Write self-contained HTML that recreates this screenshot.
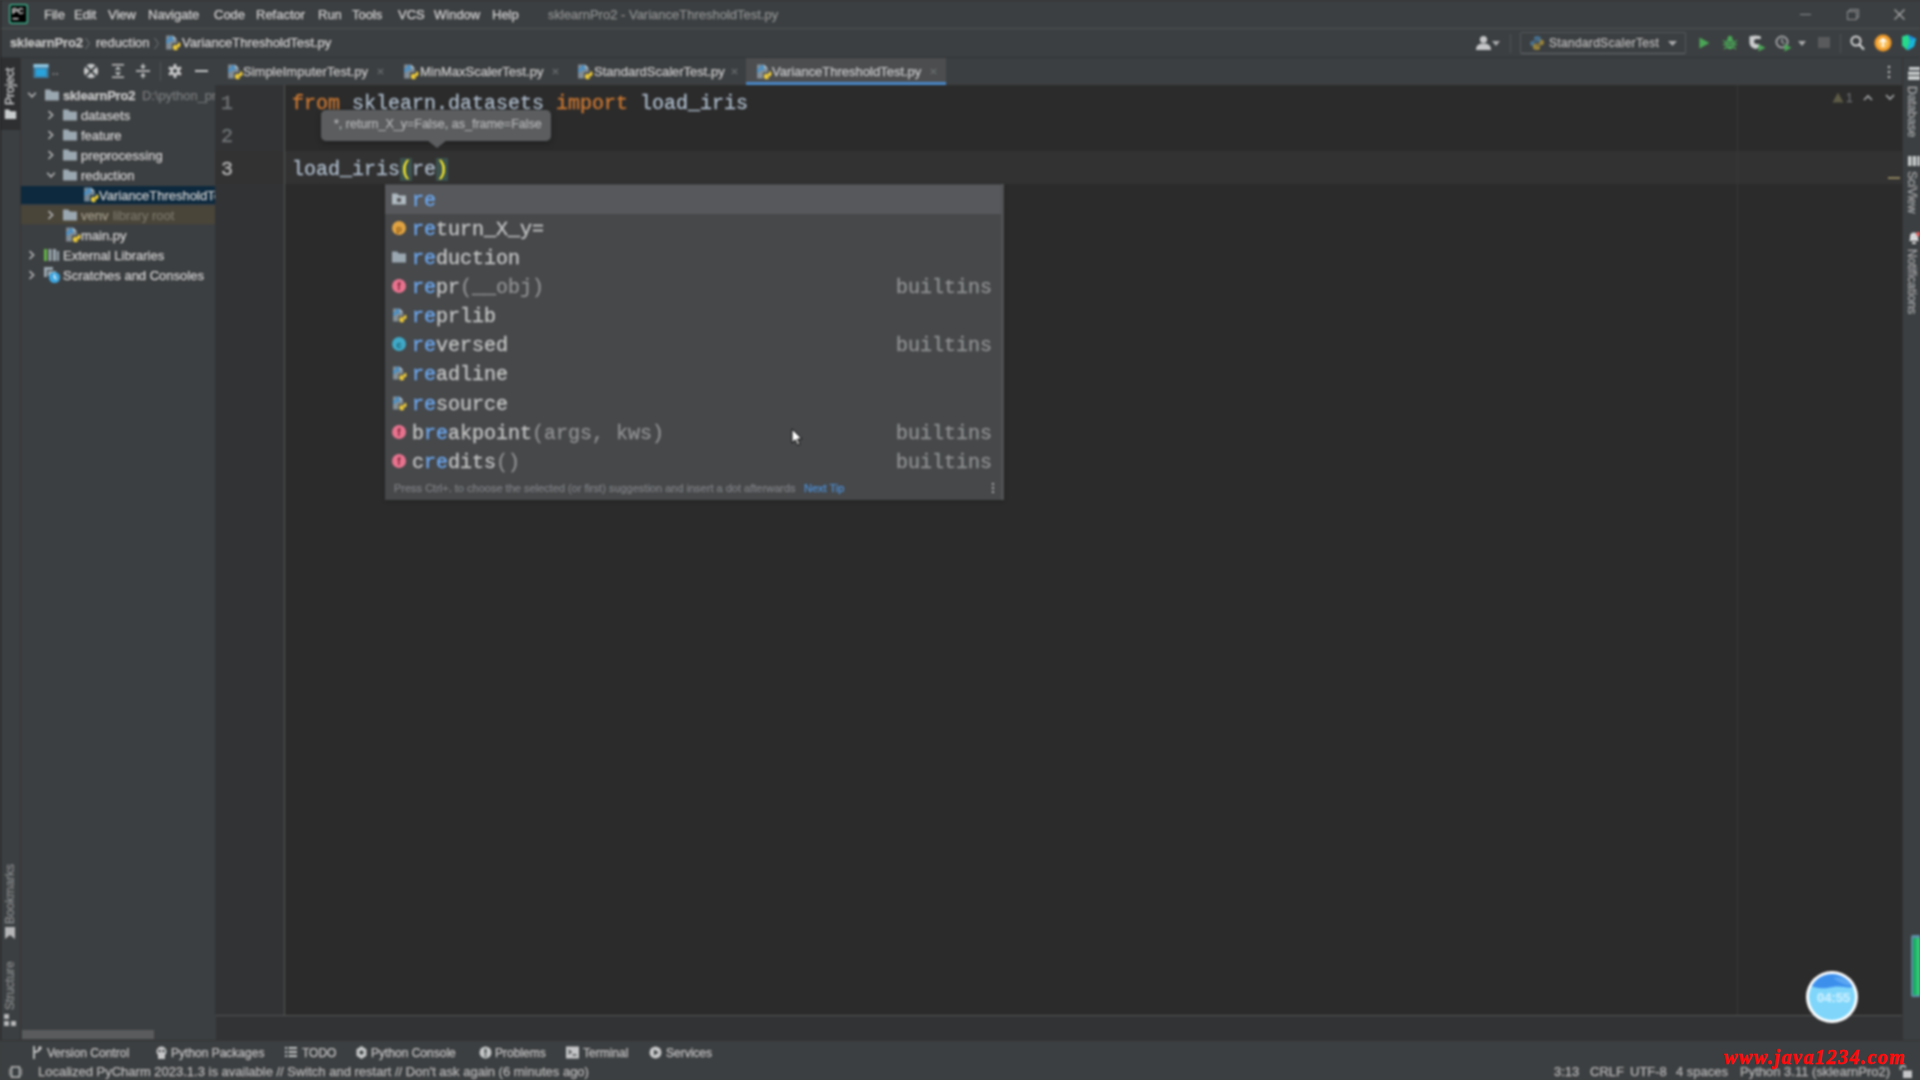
<!DOCTYPE html>
<html lang="en">
<head>
<meta charset="utf-8">
<title>sklearnPro2 - VarianceThresholdTest.py</title>
<style>
*{box-sizing:border-box;margin:0;padding:0}
html,body{width:1920px;height:1080px;overflow:hidden;background:#3c3f41}
body{position:relative;font-family:"Liberation Sans",sans-serif;font-size:13px;color:#d2d2d2}
#stage{position:absolute;left:0;top:0;width:1920px;height:1080px;overflow:hidden;background:#3c3f41;filter:blur(.9px)}
.abs{position:absolute}
.t{position:absolute;white-space:nowrap;line-height:1;-webkit-text-stroke:.25px}
.mono{font-family:"Liberation Mono",monospace;-webkit-text-stroke:.35px}
/* ---------- title bar ---------- */
#titlebar{left:0;top:0;width:1920px;height:29px;background:#3c3f41;border-top:1px solid #2f3133;border-bottom:1px solid #515354}
#titlebar .t{top:7px;font-size:13px;color:#d2d2d2}
/* ---------- nav bar ---------- */
#navbar{left:0;top:29px;width:1920px;height:29px;background:#3c3f41;border-bottom:1px solid #313335}
#navbar .t{top:7px;font-size:13px}
/* ---------- tool row / tabs ---------- */
#tabrow{left:0;top:58px;width:1920px;height:27px;background:#3c3f41}
.tab{position:absolute;top:0;height:27px}
.tab .t{top:7px;font-size:13px;color:#c8c8c8}
/* ---------- left strip ---------- */
#lstrip{left:0;top:58px;width:21px;height:982px;background:#3c3f41;border-right:1px solid #323232}
#rstrip{left:1902px;top:58px;width:18px;height:982px;background:#3c3f41;border-left:1px solid #323232}
.vtxt{position:absolute;white-space:nowrap;font-size:12px;line-height:1;color:#cccccc;-webkit-text-stroke:.25px;transform-origin:0 0}
/* ---------- project panel ---------- */
#project{left:21px;top:85px;width:194px;height:955px;background:#3c3f41;overflow:hidden}
.row{position:absolute;left:0;width:195px;height:20px}
.row .t{top:4px;font-size:13px;color:#d2d2d2}
/* ---------- editor ---------- */
#gutter{left:215px;top:85px;width:70px;height:930px;background:#313335;border-right:1px solid #555555}
#editor{left:285px;top:85px;width:1617px;height:930px;background:#2b2b2b;overflow:hidden}
.ln{position:absolute;left:6px;margin-top:2px;font-size:20px;line-height:33px;height:33px;color:#707375}
.code{position:absolute;left:7px;margin-top:2px;font-size:20px;line-height:33px;height:33px;color:#a9b7c6;white-space:pre}
.kw{color:#cc7832}
/* ---------- popup ---------- */
#popup{left:385px;top:184px;width:619px;height:316px;background:#46484a;border-right:3px solid #505254;box-shadow:0 1px 4px rgba(0,0,0,.25)}
.it{position:absolute;left:0;width:616px;height:29px}
.it .nm{position:absolute;left:27px;top:1px;font-size:20px;line-height:29px;color:#c0c0c0;white-space:pre}
.it .nm b{font-weight:normal;color:#6ba6ee}
.it .nm i{font-style:normal;color:#8d8f90}
.it .ty{position:absolute;right:9px;top:1px;font-size:20px;line-height:29px;color:#8d8f90}
.it svg{position:absolute;left:6px;top:6px}
/* ---------- bottom ---------- */
#edbottom{left:216px;top:1015px;width:1686px;height:25px;background:#313335;border-top:1px solid #555555}
#toolbar2{left:0;top:1040px;width:1920px;height:23px;background:#3c3f41;border-top:1px solid #323232}
#toolbar2 .t{top:6px;font-size:12px;color:#c2c2c2}
#status{left:0;top:1063px;width:1920px;height:17px;background:#3c3f41}
#status .t{top:2px;font-size:13px;color:#b8b8b8}
</style>
</head>
<body>
<div id="stage">

<!-- TITLE BAR -->
<div id="titlebar" class="abs">
  <svg class="abs" style="left:9px;top:3px" width="19" height="20" viewBox="0 0 19 20"><rect x="0.75" y="0.75" width="17.5" height="18.5" rx="2" fill="#000" stroke="#3fb48f" stroke-width="1.5"/><text x="3" y="9.5" font-family="Liberation Sans, sans-serif" font-size="8.5" font-weight="bold" fill="#fff">PC</text><rect x="3.5" y="14" width="6" height="1.3" fill="#fff"/></svg>
  <span class="t" style="left:44px">File</span>
  <span class="t" style="left:74px">Edit</span>
  <span class="t" style="left:108px">View</span>
  <span class="t" style="left:148px">Navigate</span>
  <span class="t" style="left:214px">Code</span>
  <span class="t" style="left:256px">Refactor</span>
  <span class="t" style="left:318px">Run</span>
  <span class="t" style="left:352px">Tools</span>
  <span class="t" style="left:398px">VCS</span>
  <span class="t" style="left:434px">Window</span>
  <span class="t" style="left:492px">Help</span>
  <span class="t" style="left:548px;color:#8f9192">sklearnPro2 - VarianceThresholdTest.py</span>
  <div class="abs" style="left:1800px;top:13px;width:11px;height:1px;background:#8c8e90"></div>
  <svg class="abs" style="left:1847px;top:8px" width="12" height="11" viewBox="0 0 12 11"><path d="M2.500 2.500V.500H11.500V8.500H9.500" fill="none" stroke="#8c8e90" stroke-width="1"/><rect x=".500" y="2.500" width="9" height="8" fill="none" stroke="#8c8e90" stroke-width="1"/></svg>
  <svg class="abs" style="left:1894px;top:8px" width="11" height="11" viewBox="0 0 11 11"><path d="M.500 .500l10 10M10.500 .500l-10 10" fill="none" stroke="#a9abad" stroke-width="1.200"/></svg>
</div>

<!-- NAV BAR -->
<div id="navbar" class="abs">
  <span class="t" style="left:10px;font-weight:bold;color:#c4c4c4;letter-spacing:-.15px">sklearnPro2</span>
  <svg class="abs" style="left:84px;top:8px" width="7" height="13" viewBox="0 0 7 13"><path d="M1.500 1L5.500 6.500 1.500 12" fill="none" stroke="#777a7c" stroke-width="1"/></svg>
  <span class="t" style="left:96px">reduction</span>
  <svg class="abs" style="left:153px;top:8px" width="7" height="13" viewBox="0 0 7 13"><path d="M1.500 1L5.500 6.500 1.500 12" fill="none" stroke="#777a7c" stroke-width="1"/></svg>
  <svg class="abs" style="left:164px;top:5px" width="17" height="17" viewBox="0 0 16 16"><path d="M2 1.5h6.5L12 5v4H7.5v5.5H2z" fill="#9aa7b0" opacity=".75"/><path d="M8.5 1.5V5H12z" fill="#c3ccd2" opacity=".9"/><path d="M3.2 3.2c0-1.1.9-1.6 2.4-1.6s2.3.5 2.3 1.6v2.2c0 .8-.6 1.3-1.4 1.3H4.6c-1 0-1.7.7-1.7 1.6v.9H2.3C1.300 9.2.8 8.300.8 6.900S1.300 4.600 2.300 4.600h3.300v-.5H3.200z" fill="#4a8fc4" transform="translate(1.2,0.600) scale(.95)"/><path d="M12.800 12.800c0 1.100-.9 1.600-2.400 1.600s-2.300-.5-2.300-1.600v-2.200c0-.8.600-1.300 1.400-1.300h1.900c1 0 1.700-.7 1.700-1.600v-.9h.6c1 0 1.500.9 1.500 2.300s-.5 2.300-1.500 2.300h-3.300v.5h2.400z" fill="#f4d03a" transform="translate(.6,1.200) scale(.98)"/></svg>
  <span class="t" style="left:182px">VarianceThresholdTest.py</span>
  <!-- right toolbar -->
  <svg class="abs" style="left:1476px;top:6px" width="15" height="16" viewBox="0 0 15 16"><circle cx="7.500" cy="4.500" r="3.600" fill="#c4c6c7"/><path d="M0 15c0-5 3-6.500 7.500-6.500S15 10 15 15z" fill="#c4c6c7"/></svg>
  <svg class="abs" style="left:1492px;top:12px" width="8" height="5" viewBox="0 0 8 5"><path d="M0 0h8L4 5z" fill="#a9abad"/></svg>
  <div class="abs" style="left:1510px;top:5px;width:1px;height:19px;background:#505355"></div>
  <div class="abs" style="left:1520px;top:3px;width:166px;height:22px;border:1px solid #56595b;border-bottom-color:#6a6d6f;border-radius:2px;background:#3c3f41"></div>
  <svg class="abs" style="left:1529px;top:6px;opacity:.65" width="16" height="16" viewBox="0 0 16 16"><path d="M8 1c-3 0-3 1.300-3 2.200V5h3.200v.8H3.300C2 5.800 1 6.800 1 8.500s1 2.700 2.300 2.700H5V9.300c0-1.200 1-2 2.200-2h3c1 0 1.800-.8 1.800-1.800V3.200C12 1.800 10.500 1 8 1z" fill="#4a86b5"/><path d="M8 15c3 0 3-1.300 3-2.200V11H7.800v-.8h4.900c1.300 0 2.300-1 2.300-2.700s-1-2.700-2.300-2.700H11v1.900c0 1.200-1 2-2.200 2h-3c-1 0-1.800.8-1.800 1.800v2.300C4 14.200 5.500 15 8 15z" fill="#c9a73a"/></svg>
  <span class="t" style="left:1549px;top:8px;font-size:12px;color:#bbbbbb;letter-spacing:.3px">StandardScalerTest</span>
  <svg class="abs" style="left:1668px;top:12px" width="9" height="5" viewBox="0 0 9 5"><path d="M0 0h9L4.500 5z" fill="#a9abad"/></svg>
  <svg class="abs" style="left:1699px;top:8px" width="11" height="12" viewBox="0 0 11 12"><path d="M.500 .500L10.500 6 .500 11.500z" fill="#4aa556"/></svg>
  <svg class="abs" style="left:1723px;top:6px" width="14" height="15" viewBox="0 0 14 15"><ellipse cx="7" cy="9" rx="4.300" ry="5.200" fill="#4aa556"/><circle cx="7" cy="3.300" r="2.500" fill="#4aa556"/><path d="M0 5.500l3.300 2M14 5.500l-3.300 2M0 9.500h3M14 9.500h-3M1 14l2.800-2.300M13 14l-2.800-2.300" stroke="#4aa556" stroke-width="1.300"/><path d="M4 7.500h6M4 10.500h6" stroke="#3c3f41" stroke-width="1"/></svg>
  <svg class="abs" style="left:1749px;top:6px" width="17" height="17" viewBox="0 0 17 17"><path d="M6.500 .500C3 .500.500 1.500.500 1.500v6c0 3.500 2.500 5.500 6 6.500 1.500-.4 2.800-1 3.800-2V9H7.500C6 9 5 8 5 6.500S6 4 7.500 4h4.300V1.500S9.500.500 6.500 .500z" fill="#c9cbcc"/><path d="M9.500 9L16.500 12.800 9.500 16.500z" fill="#4aa556"/></svg>
  <svg class="abs" style="left:1775px;top:6px" width="17" height="17" viewBox="0 0 17 17"><circle cx="7" cy="7" r="5.600" fill="none" stroke="#a2a4a6" stroke-width="1.800"/><path d="M7 3.200v4l2.300 1.600" fill="none" stroke="#a2a4a6" stroke-width="1.400"/><path d="M9.500 9L16.500 12.800 9.500 16.500z" fill="#4aa556"/></svg>
  <svg class="abs" style="left:1798px;top:12px" width="8" height="5" viewBox="0 0 8 5"><path d="M0 0h8L4 5z" fill="#a9abad"/></svg>
  <div class="abs" style="left:1818px;top:8px;width:12px;height:11px;background:#585a5c"></div>
  <div class="abs" style="left:1840px;top:5px;width:1px;height:19px;background:#505355"></div>
  <svg class="abs" style="left:1850px;top:6px" width="15" height="16" viewBox="0 0 15 16"><circle cx="6" cy="6" r="4.600" fill="none" stroke="#d0d2d3" stroke-width="2"/><path d="M9.300 9.500l4.700 5" stroke="#d0d2d3" stroke-width="2.200"/></svg>
  <svg class="abs" style="left:1874px;top:5px" width="18" height="18" viewBox="0 0 18 18"><circle cx="9" cy="9" r="8.500" fill="#ee9a2a"/><circle cx="9" cy="9" r="5.500" fill="#f9c05c"/><path d="M9 5v8M6 8l3-3 3 3" fill="none" stroke="#fff" stroke-width="1.700"/></svg>
  <svg class="abs" style="left:1901px;top:5px" width="17" height="17" viewBox="0 0 17 17"><path d="M1 2.500l6-1.800 8 3.800-2 8-6 3.800-6-5z" fill="#1f8fe0"/><path d="M1 2.500l6-1.800 2 6-3 9.600-5-5z" fill="#27d98a"/><path d="M7 16.300l2-9.600 6-2.200-2 8z" fill="#19b8d6"/></svg>
</div>

<!-- TAB ROW -->
<div id="tabrow" class="abs">
  <!-- project tool header icons -->
  <svg class="abs" style="left:33px;top:5px" width="16" height="16" viewBox="0 0 16 16"><rect x="0.500" y="1" width="15" height="14" fill="#3a7ea6"/><rect x="0.500" y="1" width="15" height="3.500" fill="#8ec3de"/><rect x="3" y="6" width="10" height="7" fill="#29a3dc"/></svg>
  <svg class="abs" style="left:52px;top:14px" width="9" height="4" viewBox="0 0 9 4"><circle cx="1.500" cy="2" r="1" fill="#8a8d8f"/><circle cx="5" cy="2" r="1" fill="#8a8d8f"/></svg>
  <svg class="abs" style="left:83px;top:5px" width="16" height="16" viewBox="0 0 16 16"><circle cx="8" cy="8" r="7.200" fill="#c4c6c7"/><path d="M3 3l10 10M13 3L3 13" stroke="#3c3f41" stroke-width="1.800"/><circle cx="8" cy="8" r="1.600" fill="#3c3f41"/></svg>
  <svg class="abs" style="left:110px;top:5px" width="16" height="16" viewBox="0 0 16 16"><path d="M2 1.800h12M2 14.200h12" stroke="#c4c6c7" stroke-width="1.600"/><path d="M8 3.500l3.200 3.300H4.800zM8 12.500l3.200-3.300H4.800z" fill="#c4c6c7"/></svg>
  <svg class="abs" style="left:135px;top:5px" width="16" height="16" viewBox="0 0 16 16"><path d="M1 8h14" stroke="#c4c6c7" stroke-width="1.600"/><path d="M8 6.200l3-3.400H5zM8 9.800l3 3.400H5z" fill="#c4c6c7"/><path d="M8 .8v2M8 13.200v2" stroke="#c4c6c7" stroke-width="1.600"/></svg>
  <div class="abs" style="left:160px;top:4px;width:1px;height:19px;background:#55585a"></div>
  <svg class="abs" style="left:168px;top:6px" width="14" height="14" viewBox="0 0 16 16"><rect x="6.400" y="0" width="3.200" height="16" transform="rotate(0 8 8)" fill="#c4c6c7"/><rect x="6.400" y="0" width="3.200" height="16" transform="rotate(60 8 8)" fill="#c4c6c7"/><rect x="6.400" y="0" width="3.200" height="16" transform="rotate(120 8 8)" fill="#c4c6c7"/><circle cx="8" cy="8" r="5.400" fill="#c4c6c7"/><circle cx="8" cy="8" r="2.300" fill="#3c3f41"/></svg>
  <div class="abs" style="left:195px;top:12px;width:13px;height:2px;background:#c4c6c7"></div>

  <!-- editor tabs -->
  <div class="tab" style="left:218px;width:175px">
    <svg class="abs" style="left:8px;top:5px" width="17" height="17" viewBox="0 0 16 16"><path d="M2 1.5h6.5L12 5v4H7.5v5.5H2z" fill="#9aa7b0" opacity=".75"/><path d="M8.5 1.5V5H12z" fill="#c3ccd2" opacity=".9"/><path d="M3.2 3.2c0-1.1.9-1.6 2.4-1.6s2.3.5 2.3 1.6v2.2c0 .8-.6 1.3-1.4 1.3H4.6c-1 0-1.7.7-1.7 1.6v.9H2.3C1.300 9.2.8 8.300.8 6.900S1.300 4.600 2.300 4.600h3.300v-.5H3.200z" fill="#4a8fc4" transform="translate(1.2,0.600) scale(.95)"/><path d="M12.800 12.800c0 1.100-.9 1.600-2.400 1.600s-2.300-.5-2.300-1.600v-2.200c0-.8.600-1.300 1.400-1.300h1.900c1 0 1.700-.7 1.700-1.600v-.9h.6c1 0 1.500.9 1.500 2.300s-.5 2.300-1.500 2.300h-3.300v.5h2.400z" fill="#f4d03a" transform="translate(.6,1.200) scale(.98)"/></svg>
    <span class="t" style="left:25px">SimpleImputerTest.py</span>
    <svg class="abs" style="left:158px;top:9px" width="9" height="9" viewBox="0 0 10 10"><path d="M2 2l6 6M8 2l-6 6" fill="none" stroke="#6e7173" stroke-width="1.200"/></svg>
  </div>
  <div class="tab" style="left:394px;width:174px">
    <svg class="abs" style="left:8px;top:5px" width="17" height="17" viewBox="0 0 16 16"><path d="M2 1.5h6.5L12 5v4H7.5v5.5H2z" fill="#9aa7b0" opacity=".75"/><path d="M8.5 1.5V5H12z" fill="#c3ccd2" opacity=".9"/><path d="M3.2 3.2c0-1.1.9-1.6 2.4-1.6s2.3.5 2.3 1.6v2.2c0 .8-.6 1.3-1.4 1.3H4.6c-1 0-1.7.7-1.7 1.6v.9H2.3C1.300 9.2.8 8.300.8 6.900S1.300 4.600 2.300 4.600h3.300v-.5H3.200z" fill="#4a8fc4" transform="translate(1.2,0.600) scale(.95)"/><path d="M12.800 12.800c0 1.100-.9 1.600-2.400 1.600s-2.300-.5-2.300-1.600v-2.200c0-.8.600-1.300 1.400-1.300h1.900c1 0 1.700-.7 1.700-1.600v-.9h.6c1 0 1.500.9 1.500 2.300s-.5 2.300-1.500 2.300h-3.300v.5h2.400z" fill="#f4d03a" transform="translate(.6,1.200) scale(.98)"/></svg>
    <span class="t" style="left:26px">MinMaxScalerTest.py</span>
    <svg class="abs" style="left:157px;top:9px" width="9" height="9" viewBox="0 0 10 10"><path d="M2 2l6 6M8 2l-6 6" fill="none" stroke="#6e7173" stroke-width="1.200"/></svg>
  </div>
  <div class="tab" style="left:568px;width:178px">
    <svg class="abs" style="left:8px;top:5px" width="17" height="17" viewBox="0 0 16 16"><path d="M2 1.5h6.5L12 5v4H7.5v5.5H2z" fill="#9aa7b0" opacity=".75"/><path d="M8.5 1.5V5H12z" fill="#c3ccd2" opacity=".9"/><path d="M3.2 3.2c0-1.1.9-1.6 2.4-1.6s2.3.5 2.3 1.6v2.2c0 .8-.6 1.3-1.4 1.3H4.6c-1 0-1.7.7-1.7 1.6v.9H2.3C1.300 9.2.8 8.300.8 6.900S1.300 4.600 2.300 4.600h3.300v-.5H3.200z" fill="#4a8fc4" transform="translate(1.2,0.600) scale(.95)"/><path d="M12.800 12.800c0 1.100-.9 1.600-2.400 1.600s-2.300-.5-2.300-1.600v-2.200c0-.8.600-1.300 1.400-1.300h1.900c1 0 1.700-.7 1.700-1.600v-.9h.6c1 0 1.500.9 1.500 2.300s-.5 2.300-1.500 2.300h-3.300v.5h2.400z" fill="#f4d03a" transform="translate(.6,1.200) scale(.98)"/></svg>
    <span class="t" style="left:26px">StandardScalerTest.py</span>
    <svg class="abs" style="left:162px;top:9px" width="9" height="9" viewBox="0 0 10 10"><path d="M2 2l6 6M8 2l-6 6" fill="none" stroke="#6e7173" stroke-width="1.200"/></svg>
  </div>
  <div class="tab" style="left:746px;width:200px;background:#4b4d4f;border-bottom:3px solid #4a88c7">
    <svg class="abs" style="left:9px;top:5px" width="17" height="17" viewBox="0 0 16 16"><path d="M2 1.5h6.5L12 5v4H7.5v5.5H2z" fill="#9aa7b0" opacity=".75"/><path d="M8.5 1.5V5H12z" fill="#c3ccd2" opacity=".9"/><path d="M3.2 3.2c0-1.1.9-1.6 2.4-1.6s2.3.5 2.3 1.6v2.2c0 .8-.6 1.3-1.4 1.3H4.6c-1 0-1.7.7-1.7 1.6v.9H2.3C1.300 9.2.8 8.300.8 6.900S1.300 4.600 2.300 4.600h3.300v-.5H3.200z" fill="#4a8fc4" transform="translate(1.2,0.600) scale(.95)"/><path d="M12.800 12.800c0 1.100-.9 1.600-2.400 1.600s-2.300-.5-2.300-1.600v-2.200c0-.8.600-1.300 1.400-1.300h1.900c1 0 1.700-.7 1.700-1.600v-.9h.6c1 0 1.500.9 1.500 2.300s-.5 2.300-1.500 2.300h-3.300v.5h2.400z" fill="#f4d03a" transform="translate(.6,1.200) scale(.98)"/></svg>
    <span class="t" style="left:26px">VarianceThresholdTest.py</span>
    <svg class="abs" style="left:183px;top:9px" width="9" height="9" viewBox="0 0 10 10"><path d="M2 2l6 6M8 2l-6 6" fill="none" stroke="#6e7173" stroke-width="1.200"/></svg>
  </div>
  <svg class="abs" style="left:1887px;top:7px" width="4" height="14" viewBox="0 0 4 14"><circle cx="2" cy="2" r="1.200" fill="#c4c6c7"/><circle cx="2" cy="7" r="1.200" fill="#c4c6c7"/><circle cx="2" cy="12" r="1.200" fill="#c4c6c7"/></svg>
</div>

<!-- LEFT STRIP -->
<div id="lstrip" class="abs">
  <div class="abs" style="left:0;top:0;width:20px;height:72px;background:#2d2f31"></div>
  <span class="vtxt" style="left:4px;top:47px;transform:rotate(-90deg);font-size:12px;color:#d0d0d0">Project</span>
  <svg class="abs" style="left:4px;top:50px" width="13" height="12" viewBox="0 0 16 14"><path d="M1 1.500h5.200l1.600 2H15v9.500H1z" fill="#c9cccd"/></svg>
  <span class="vtxt" style="left:4px;top:866px;transform:rotate(-90deg);font-size:12px;color:#8a8c8e">Bookmarks</span>
  <svg class="abs" style="left:5px;top:869px" width="10" height="12" viewBox="0 0 10 12"><path d="M0 0h10v12L5 8 0 12z" fill="#b4b6b8"/></svg>
  <span class="vtxt" style="left:4px;top:952px;transform:rotate(-90deg);font-size:12px;color:#8a8c8e">Structure</span>
  <svg class="abs" style="left:4px;top:956px" width="12" height="12" viewBox="0 0 12 12"><rect x="0" y="0" width="5" height="5" fill="#b4b6b8"/><rect x="0" y="7" width="5" height="5" fill="#b4b6b8"/><rect x="7" y="7" width="5" height="5" fill="#b4b6b8"/></svg>
</div>
<div class="abs" style="left:0;top:0;width:1px;height:1080px;background:#1e1f20"></div>

<!-- PROJECT -->
<div id="project" class="abs">
  <div class="row" style="top:0px;"><svg class="abs" style="left:6px;top:5px" width="10" height="10" viewBox="0 0 10 10"><path d="M1.200 2.800L5 6.800 8.800 2.800" fill="none" stroke="#b0b2b4" stroke-width="1.600"/></svg><svg class="abs" style="left:23px;top:2px" width="16" height="16" viewBox="0 0 16 16"><path d="M1 2.500h5.200l1.600 2H15v9H1z" fill="#9aa7b0"/></svg><span class="t" style="left:42px;font-weight:bold;color:#c8c8c8;letter-spacing:-.2px">sklearnPro2</span><span class="t" style="left:121px;color:#787a7c">D:\python_pro</span></div>
  <div class="row" style="top:20px;"><svg class="abs" style="left:25px;top:5px" width="10" height="10" viewBox="0 0 10 10"><path d="M2.500 1.200L6.600 5 2.500 8.800" fill="none" stroke="#b0b2b4" stroke-width="1.600"/></svg><svg class="abs" style="left:41px;top:2px" width="16" height="16" viewBox="0 0 16 16"><path d="M1 2.500h5.200l1.600 2H15v9H1z" fill="#9aa7b0"/></svg><span class="t" style="left:60px">datasets</span></div>
  <div class="row" style="top:40px;"><svg class="abs" style="left:25px;top:5px" width="10" height="10" viewBox="0 0 10 10"><path d="M2.500 1.200L6.600 5 2.500 8.800" fill="none" stroke="#b0b2b4" stroke-width="1.600"/></svg><svg class="abs" style="left:41px;top:2px" width="16" height="16" viewBox="0 0 16 16"><path d="M1 2.500h5.200l1.600 2H15v9H1z" fill="#9aa7b0"/></svg><span class="t" style="left:60px">feature</span></div>
  <div class="row" style="top:60px;"><svg class="abs" style="left:25px;top:5px" width="10" height="10" viewBox="0 0 10 10"><path d="M2.500 1.200L6.600 5 2.500 8.800" fill="none" stroke="#b0b2b4" stroke-width="1.600"/></svg><svg class="abs" style="left:41px;top:2px" width="16" height="16" viewBox="0 0 16 16"><path d="M1 2.500h5.200l1.600 2H15v9H1z" fill="#9aa7b0"/></svg><span class="t" style="left:60px">preprocessing</span></div>
  <div class="row" style="top:80px;"><svg class="abs" style="left:25px;top:5px" width="10" height="10" viewBox="0 0 10 10"><path d="M1.200 2.800L5 6.800 8.800 2.800" fill="none" stroke="#b0b2b4" stroke-width="1.600"/></svg><svg class="abs" style="left:41px;top:2px" width="16" height="16" viewBox="0 0 16 16"><path d="M1 2.500h5.200l1.600 2H15v9H1z" fill="#9aa7b0"/></svg><span class="t" style="left:60px">reduction</span></div>
  <div class="row" style="top:100px"><div class="abs" style="left:0;top:1px;width:194px;height:18px;background:#0d293e"></div><svg class="abs" style="left:61px;top:1px" width="17" height="17" viewBox="0 0 16 16"><path d="M2 1.5h6.5L12 5v4H7.5v5.5H2z" fill="#9aa7b0" opacity=".75"/><path d="M8.5 1.5V5H12z" fill="#c3ccd2" opacity=".9"/><path d="M3.2 3.2c0-1.1.9-1.6 2.4-1.6s2.3.5 2.3 1.6v2.2c0 .8-.6 1.3-1.4 1.3H4.6c-1 0-1.7.7-1.7 1.6v.9H2.3C1.300 9.2.8 8.300.8 6.900S1.300 4.600 2.300 4.600h3.300v-.5H3.200z" fill="#4a8fc4" transform="translate(1.2,0.600) scale(.95)"/><path d="M12.800 12.800c0 1.100-.9 1.600-2.400 1.600s-2.300-.5-2.300-1.600v-2.200c0-.8.600-1.300 1.400-1.300h1.900c1 0 1.700-.7 1.700-1.600v-.9h.6c1 0 1.500.9 1.500 2.300s-.5 2.300-1.500 2.300h-3.300v.5h2.400z" fill="#f4d03a" transform="translate(.6,1.200) scale(.98)"/></svg><span class="t" style="left:78px">VarianceThresholdTest.py</span></div>
  <div class="row" style="top:120px"><div class="abs" style="left:0;top:1px;width:194px;height:18px;background:#4a4539"></div><svg class="abs" style="left:25px;top:5px" width="10" height="10" viewBox="0 0 10 10"><path d="M2.500 1.200L6.600 5 2.500 8.800" fill="none" stroke="#b0b2b4" stroke-width="1.600"/></svg><svg class="abs" style="left:41px;top:2px" width="16" height="16" viewBox="0 0 16 16"><path d="M1 2.500h5.200l1.600 2H15v9H1z" fill="#9aa7b0"/></svg><span class="t" style="left:60px;color:#a09c8c">venv</span><span class="t" style="left:92px;color:#787668">library root</span></div>
  <div class="row" style="top:140px;"><svg class="abs" style="left:43px;top:1px" width="17" height="17" viewBox="0 0 16 16"><path d="M2 1.5h6.5L12 5v4H7.5v5.5H2z" fill="#9aa7b0" opacity=".75"/><path d="M8.5 1.5V5H12z" fill="#c3ccd2" opacity=".9"/><path d="M3.2 3.2c0-1.1.9-1.6 2.4-1.6s2.3.5 2.3 1.6v2.2c0 .8-.6 1.3-1.4 1.3H4.6c-1 0-1.7.7-1.7 1.6v.9H2.3C1.300 9.2.8 8.300.8 6.900S1.300 4.600 2.300 4.600h3.300v-.5H3.200z" fill="#4a8fc4" transform="translate(1.2,0.600) scale(.95)"/><path d="M12.800 12.800c0 1.100-.9 1.600-2.400 1.600s-2.300-.5-2.300-1.600v-2.200c0-.8.600-1.300 1.400-1.300h1.900c1 0 1.700-.7 1.700-1.600v-.9h.6c1 0 1.500.9 1.500 2.300s-.5 2.300-1.500 2.300h-3.300v.5h2.400z" fill="#f4d03a" transform="translate(.6,1.200) scale(.98)"/></svg><span class="t" style="left:60px">main.py</span></div>
  <div class="row" style="top:160px;"><svg class="abs" style="left:6px;top:5px" width="10" height="10" viewBox="0 0 10 10"><path d="M2.500 1.200L6.600 5 2.500 8.800" fill="none" stroke="#b0b2b4" stroke-width="1.600"/></svg><svg class="abs" style="left:23px;top:3px" width="15" height="14" viewBox="0 0 15 14"><rect x="0" y="1" width="3" height="12" fill="#62b543"/><rect x="4.500" y="1" width="3" height="12" fill="#9aa7b0"/><rect x="9" y="1" width="3" height="12" fill="#9aa7b0"/><rect x="13" y="3" width="2" height="10" fill="#9aa7b0"/></svg><span class="t" style="left:42px">External Libraries</span></div>
  <div class="row" style="top:180px;"><svg class="abs" style="left:6px;top:5px" width="10" height="10" viewBox="0 0 10 10"><path d="M2.500 1.200L6.600 5 2.500 8.800" fill="none" stroke="#b0b2b4" stroke-width="1.600"/></svg><svg class="abs" style="left:22px;top:1px" width="18" height="18" viewBox="0 0 18 18"><path d="M1 1h9v3H4v7H1z" fill="#9aa7b0"/><path d="M5 5h8v5H5z" fill="#9aa7b0"/><circle cx="11.500" cy="11.500" r="5.500" fill="#3ea6e0"/><path d="M11.500 8.500v3.300l2 1.200" stroke="#fff" stroke-width="1.300" fill="none"/></svg><span class="t" style="left:42px">Scratches and Consoles</span></div>
  <div class="abs" style="left:1px;top:945px;width:132px;height:9px;background:#595b5d"></div>
</div>

<!-- GUTTER + EDITOR -->
<div id="gutter" class="abs">
  <span class="ln mono" style="top:0px">1</span>
  <span class="ln mono" style="top:33px">2</span>
  <div class="abs" style="left:0;top:66px;width:68px;height:33px;background:#323232"></div>
  <span class="ln mono" style="top:66px;color:#b4b4b4">3</span>
</div>
<div id="editor" class="abs">
  <div class="abs" style="left:0;top:66px;width:1617px;height:33px;background:#323232"></div>
  <div class="abs" style="left:1452px;top:0;width:1px;height:930px;background:#393939"></div>
  <div class="code mono" style="top:0px"><span class="kw">from</span> sklearn.datasets <span class="kw">import</span> load_iris</div>
  <div class="code mono" style="top:66px">load_iris<span style="background:#3b514d;color:#ffef28">(</span>re<span style="background:#3b514d;color:#ffef28">)</span></div>
  <!-- inspection widget -->
  <svg class="abs" style="left:1547px;top:7px" width="12" height="11" viewBox="0 0 12 11"><path d="M6 0.500L11.500 10.500H0.500z" fill="#5d5a45"/></svg>
  <span class="t" style="left:1561px;top:7px;font-size:12px;color:#6b6d6f">1</span>
  <svg class="abs" style="left:1578px;top:9px" width="10" height="7" viewBox="0 0 10 7"><path d="M1 6L5 2l4 4" fill="none" stroke="#a6a8aa" stroke-width="1.600"/></svg>
  <svg class="abs" style="left:1600px;top:9px" width="10" height="7" viewBox="0 0 10 7"><path d="M1 1l4 4 4-4" fill="none" stroke="#a6a8aa" stroke-width="1.600"/></svg>
  <div class="abs" style="left:1603px;top:92px;width:12px;height:2px;background:#8f8560"></div>
  <!-- parameter info tooltip -->
  <div class="abs" style="left:36px;top:25px;width:230px;height:31px;background:#5b5d5f;border-radius:5px;box-shadow:0 2px 6px rgba(0,0,0,.3)"></div>
  <svg class="abs" style="left:142px;top:55px" width="20" height="8" viewBox="0 0 20 8"><path d="M0 0h20L10 8z" fill="#5b5d5f"/></svg>
  <span class="t" style="left:49px;top:33px;font-size:12.500px;color:#b2b4b5">*, return_X_y=False, as_frame=False</span>
</div>

<!-- RIGHT STRIP -->
<div id="rstrip" class="abs">
  <svg class="abs" style="left:5px;top:9px" width="13" height="13" viewBox="0 0 13 13"><rect x="1" y="0" width="11" height="3" fill="#c9cccd"/><rect x="0" y="4.500" width="13" height="3.500" fill="#c9cccd"/><rect x="0" y="9" width="13" height="4" fill="#c9cccd"/></svg>
  <span class="vtxt" style="left:15px;top:28px;transform:rotate(90deg);color:#a8aaac">Database</span>
  <svg class="abs" style="left:5px;top:98px" width="13" height="10" viewBox="0 0 13 10"><rect x="0" y="0" width="3.500" height="10" fill="#c9cccd"/><rect x="4.700" y="0" width="3.500" height="10" fill="#c9cccd"/><rect x="9.400" y="0" width="3.600" height="10" fill="#c9cccd"/></svg>
  <span class="vtxt" style="left:15px;top:113px;transform:rotate(90deg);color:#a8aaac">SciView</span>
  <svg class="abs" style="left:4px;top:174px" width="14" height="12" viewBox="0 0 14 12"><path d="M2 9c1-1 1-2.500 1-4.500C3 2 4.800.500 7 .500s4 1.500 4 4c0 2 0 3.500 1 4.500z" fill="#d4d6d7"/><rect x="5" y="10" width="4" height="2" fill="#d4d6d7"/><circle cx="11.500" cy="2" r="2.300" fill="#e05555"/></svg>
  <span class="vtxt" style="left:15px;top:191px;transform:rotate(90deg);color:#a8aaac">Notifications</span>
</div>

<!-- POPUP -->
<div id="popup" class="abs">
  <div class="it" style="top:1.00px;background:#56585b;"><svg width="16" height="16" viewBox="0 0 16 16"><path d="M1 2.500h5.200l1.600 2H15v9H1z" fill="#aeb9c0"/><path d="M6 7h4v4H6z" fill="#58595b"/></svg><span class="nm mono"><b>re</b></span></div>
  <div class="it" style="top:30.08px;"><svg width="16" height="16" viewBox="0 0 16 16"><circle cx="8" cy="8" r="7" fill="#e0a342"/><text x="8" y="11.500" text-anchor="middle" font-family="Liberation Sans, sans-serif" font-size="9" font-weight="bold" fill="#8a5a17">p</text></svg><span class="nm mono"><b>re</b>turn_X_y=</span></div>
  <div class="it" style="top:59.16px;"><svg width="16" height="16" viewBox="0 0 16 16"><path d="M1 2.500h5.200l1.600 2H15v9H1z" fill="#9aa7b0"/></svg><span class="nm mono"><b>re</b>duction</span></div>
  <div class="it" style="top:88.24px;"><svg width="16" height="16" viewBox="0 0 16 16"><circle cx="8" cy="8" r="7" fill="#e8738f"/><text x="8" y="11.500" text-anchor="middle" font-family="Liberation Sans, sans-serif" font-size="10" font-weight="bold" fill="#7a2338">f</text></svg><span class="nm mono"><b>re</b>pr<i>(__obj)</i></span><span class="ty mono">builtins</span></div>
  <div class="it" style="top:117.32px;"><svg width="16" height="16" viewBox="0 0 16 16"><path d="M2 1.5h6.5L12 5v4H7.5v5.5H2z" fill="#9aa7b0" opacity=".75"/><path d="M8.5 1.5V5H12z" fill="#c3ccd2" opacity=".9"/><path d="M3.2 3.2c0-1.1.9-1.6 2.4-1.6s2.3.5 2.3 1.6v2.2c0 .8-.6 1.3-1.4 1.3H4.6c-1 0-1.7.7-1.7 1.6v.9H2.3C1.300 9.2.8 8.300.8 6.900S1.300 4.600 2.300 4.600h3.300v-.5H3.200z" fill="#4a8fc4" transform="translate(1.2,0.600) scale(.95)"/><path d="M12.800 12.800c0 1.100-.9 1.600-2.400 1.600s-2.300-.5-2.300-1.600v-2.200c0-.8.600-1.300 1.400-1.300h1.900c1 0 1.700-.7 1.700-1.600v-.9h.6c1 0 1.500.9 1.500 2.300s-.5 2.300-1.500 2.300h-3.300v.5h2.400z" fill="#f4d03a" transform="translate(.6,1.200) scale(.98)"/></svg><span class="nm mono"><b>re</b>prlib</span></div>
  <div class="it" style="top:146.40px;"><svg width="16" height="16" viewBox="0 0 16 16"><circle cx="8" cy="8" r="7" fill="#3fa9c7"/><text x="8" y="11.500" text-anchor="middle" font-family="Liberation Sans, sans-serif" font-size="9" font-weight="bold" fill="#1c5a6c">c</text></svg><span class="nm mono"><b>re</b>versed</span><span class="ty mono">builtins</span></div>
  <div class="it" style="top:175.48px;"><svg width="16" height="16" viewBox="0 0 16 16"><path d="M2 1.5h6.5L12 5v4H7.5v5.5H2z" fill="#9aa7b0" opacity=".75"/><path d="M8.5 1.5V5H12z" fill="#c3ccd2" opacity=".9"/><path d="M3.2 3.2c0-1.1.9-1.6 2.4-1.6s2.3.5 2.3 1.6v2.2c0 .8-.6 1.3-1.4 1.3H4.6c-1 0-1.7.7-1.7 1.6v.9H2.3C1.300 9.2.8 8.300.8 6.900S1.300 4.600 2.300 4.600h3.300v-.5H3.200z" fill="#4a8fc4" transform="translate(1.2,0.600) scale(.95)"/><path d="M12.800 12.800c0 1.100-.9 1.600-2.400 1.600s-2.300-.5-2.300-1.600v-2.200c0-.8.600-1.300 1.400-1.300h1.900c1 0 1.700-.7 1.700-1.600v-.9h.6c1 0 1.500.9 1.500 2.300s-.5 2.300-1.500 2.300h-3.300v.5h2.400z" fill="#f4d03a" transform="translate(.6,1.200) scale(.98)"/></svg><span class="nm mono"><b>re</b>adline</span></div>
  <div class="it" style="top:204.56px;"><svg width="16" height="16" viewBox="0 0 16 16"><path d="M2 1.5h6.5L12 5v4H7.5v5.5H2z" fill="#9aa7b0" opacity=".75"/><path d="M8.5 1.5V5H12z" fill="#c3ccd2" opacity=".9"/><path d="M3.2 3.2c0-1.1.9-1.6 2.4-1.6s2.3.5 2.3 1.6v2.2c0 .8-.6 1.3-1.4 1.3H4.6c-1 0-1.7.7-1.7 1.6v.9H2.3C1.300 9.2.8 8.300.8 6.900S1.300 4.600 2.300 4.600h3.300v-.5H3.200z" fill="#4a8fc4" transform="translate(1.2,0.600) scale(.95)"/><path d="M12.800 12.800c0 1.100-.9 1.600-2.400 1.600s-2.300-.5-2.300-1.600v-2.200c0-.8.600-1.300 1.400-1.300h1.900c1 0 1.700-.7 1.700-1.600v-.9h.6c1 0 1.500.9 1.500 2.300s-.5 2.300-1.500 2.300h-3.300v.5h2.400z" fill="#f4d03a" transform="translate(.6,1.200) scale(.98)"/></svg><span class="nm mono"><b>re</b>source</span></div>
  <div class="it" style="top:233.64px;"><svg width="16" height="16" viewBox="0 0 16 16"><circle cx="8" cy="8" r="7" fill="#e8738f"/><text x="8" y="11.500" text-anchor="middle" font-family="Liberation Sans, sans-serif" font-size="10" font-weight="bold" fill="#7a2338">f</text></svg><span class="nm mono">b<b>re</b>akpoint<i>(args, kws)</i></span><span class="ty mono">builtins</span></div>
  <div class="it" style="top:262.72px;"><svg width="16" height="16" viewBox="0 0 16 16"><circle cx="8" cy="8" r="7" fill="#e8738f"/><text x="8" y="11.500" text-anchor="middle" font-family="Liberation Sans, sans-serif" font-size="10" font-weight="bold" fill="#7a2338">f</text></svg><span class="nm mono">c<b>re</b>dits<i>()</i></span><span class="ty mono">builtins</span></div>
  <span class="t" style="left:9px;top:299px;font-size:11px;color:#7d7f82">Press Ctrl+. to choose the selected (or first) suggestion and insert a dot afterwards</span>
  <span class="t" style="left:419px;top:299px;font-size:11px;color:#4d8fd6">Next Tip</span>
  <svg class="abs" style="left:606px;top:298px" width="4" height="12" viewBox="0 0 4 12"><circle cx="2" cy="2" r="1.100" fill="#c4c6c7"/><circle cx="2" cy="6" r="1.100" fill="#c4c6c7"/><circle cx="2" cy="10" r="1.100" fill="#c4c6c7"/></svg>
</div>

<!-- BOTTOM -->
<div id="edbottom" class="abs"></div>
<div id="toolbar2" class="abs">
  <svg class="abs" style="left:32px;top:5px" width="10" height="13" viewBox="0 0 10 13"><path d="M2 0v13M2 6c3 0 6-1 6-5" fill="none" stroke="#c4c6c7" stroke-width="1.800"/><circle cx="8" cy="2" r="1.800" fill="#c4c6c7"/></svg>
  <span class="t" style="left:47px">Version Control</span>
  <svg class="abs" style="left:155px;top:5px" width="13" height="13" viewBox="0 0 13 13"><circle cx="6.500" cy="5.500" r="5" fill="#c4c6c7"/><rect x="3" y="9" width="7" height="4" fill="#c4c6c7"/><circle cx="4.500" cy="5" r="1.200" fill="#3c3f41"/><circle cx="8.500" cy="5" r="1.200" fill="#3c3f41"/></svg>
  <span class="t" style="left:171px">Python Packages</span>
  <svg class="abs" style="left:285px;top:6px" width="12" height="10" viewBox="0 0 12 10"><path d="M0 1h2M3.500 1H12M0 5h2M3.500 5H12M0 9h2M3.500 9H12" stroke="#c4c6c7" stroke-width="1.800"/></svg>
  <span class="t" style="left:302px">TODO</span>
  <svg class="abs" style="left:355px;top:5px" width="13" height="13" viewBox="0 0 13 13"><path d="M6.500 0l5 3.300v6.400l-5 3.300-5-3.300V3.300z" fill="#c4c6c7"/><circle cx="6.500" cy="6.500" r="2" fill="#3c3f41"/></svg>
  <span class="t" style="left:371px">Python Console</span>
  <svg class="abs" style="left:479px;top:5px" width="13" height="13" viewBox="0 0 13 13"><circle cx="6.500" cy="6.500" r="6" fill="#c4c6c7"/><rect x="5.600" y="2.800" width="1.800" height="5" fill="#3c3f41"/><rect x="5.600" y="8.800" width="1.800" height="1.800" fill="#3c3f41"/></svg>
  <span class="t" style="left:495px">Problems</span>
  <svg class="abs" style="left:566px;top:5px" width="13" height="13" viewBox="0 0 13 13"><rect x="0" y="0.500" width="13" height="12" fill="#c4c6c7"/><path d="M2.500 4l2.500 2-2.500 2" fill="none" stroke="#3c3f41" stroke-width="1.300"/><rect x="6.500" y="8.300" width="4" height="1.300" fill="#3c3f41"/></svg>
  <span class="t" style="left:583px">Terminal</span>
  <svg class="abs" style="left:649px;top:5px" width="13" height="13" viewBox="0 0 13 13"><circle cx="6.500" cy="6.500" r="6" fill="#c4c6c7"/><path d="M5 3.800v5.400L9.500 6.500z" fill="#3c3f41"/></svg>
  <span class="t" style="left:666px">Services</span>
</div>
<div id="status" class="abs">
  <svg class="abs" style="left:9px;top:3px" width="13" height="12" viewBox="0 0 13 12"><rect x="2.500" y="1" width="8" height="10" fill="none" stroke="#c4c6c7" stroke-width="1.400"/><path d="M0 2.500v7M13 2.500v7" stroke="#c4c6c7" stroke-width="1.400"/></svg>
  <span class="t" id="stmsg" style="left:38px">Localized PyCharm 2023.1.3 is available // Switch and restart // Don't ask again (6 minutes ago)</span>
  <span class="t" style="left:1554px">3:13</span>
  <span class="t" style="left:1590px">CRLF</span>
  <span class="t" style="left:1630px">UTF-8</span>
  <span class="t" style="left:1676px">4 spaces</span>
  <span class="t" style="left:1740px">Python 3.11 (sklearnPro2)</span>
  <svg class="abs" style="left:1899px;top:2px" width="13" height="13" viewBox="0 0 13 13"><path d="M1.500 5V3a2.500 2.500 0 0 1 5 0" fill="none" stroke="#c4c6c7" stroke-width="1.500"/><rect x="4" y="5.500" width="9" height="7.500" fill="#c4c6c7"/></svg>
</div>


<!-- floating timer bubble -->
<div class="abs" style="left:1806px;top:971px;width:52px;height:52px;border-radius:50%;background:#ffffff;overflow:hidden">
  <div class="abs" style="left:3px;top:3px;width:46px;height:46px;border-radius:50%;background:#7fd6fa;overflow:hidden">
    <svg class="abs" style="left:0;top:0" width="48" height="48" viewBox="0 0 48 48"><path d="M0 0h48v12c-8 4-14-1-24 1S8 15 0 11z" fill="#3d8fec"/><path d="M24 4c8-2 16 1 22 6-6 3-12 1-22-6z" fill="#5aa6f2"/></svg>
    <span class="t" style="left:8px;top:17px;font-size:13px;font-weight:bold;color:#c9eeff">04:55</span>
  </div>
</div>

<!-- green meter on right edge -->
<div class="abs" style="left:1911px;top:935px;width:9px;height:62px;background:#5b8fa8;border-radius:2px 0 0 2px"></div>
<div class="abs" style="left:1913px;top:938px;width:7px;height:57px;background:linear-gradient(90deg,#0f9d58,#3ddc84)"></div>

<!-- mouse cursor -->
<svg class="abs" style="left:791px;top:428px" width="12" height="19" viewBox="0 0 12 19"><path d="M1 1v14l3.300-3.200 2.300 5.400 2.200-.9-2.300-5.300H11z" fill="#fff" stroke="#000" stroke-width="1"/></svg>

</div>
<!-- watermark -->
<span class="t" id="wm" style="left:1724px;top:1047px;font-family:'Liberation Serif',serif;font-weight:bold;font-style:italic;font-size:20px;letter-spacing:1.500px;color:#ff0a0a;-webkit-text-stroke:.5px #ff0a0a">www.java1234.com</span>
</body>
</html>
